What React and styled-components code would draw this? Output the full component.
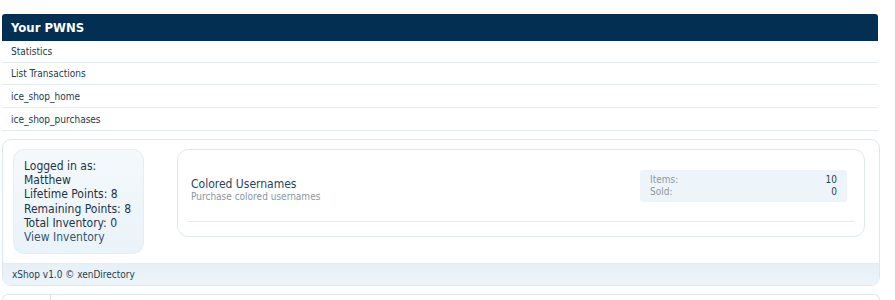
import React from "react";
import styled, { createGlobalStyle } from "styled-components";

const GlobalStyle = createGlobalStyle`
  body {
    margin: 0;
    background: #fff;
    font-family: "DejaVu Sans Condensed", "DejaVu Sans", sans-serif;
    color: #2b3f4f;
  }
`;

const Page = styled.div`
  width: 878px;
  padding: 14px 0 0 2px;
`;

const Section = styled.div`
  width: 876px;
`;

const Header = styled.h3`
  margin: 0;
  height: 27px;
  padding: 0 9px;
  display: flex;
  align-items: center;
  background: #032f53;
  border-radius: 3px 3px 0 0;
  color: #fff;
  font-size: 13px;
  font-weight: bold;
`;

const NavRow = styled.a`
  display: flex;
  align-items: center;
  height: 21px;
  padding: 0 9px;
  border-bottom: 1px solid #e4ecf1;
  font-size: 10px;
  color: #243a4c;
  text-decoration: none;
  &:nth-of-type(3), &:nth-of-type(4) { height: 22px; }
`;

const Shop = styled.div`
  margin-top: 8px;
  width: 876px;
  border: 1px solid #dbe8f1;
  border-radius: 9px;
  overflow: hidden;
`;

const ShopBody = styled.div`
  display: flex;
  align-items: flex-start;
  gap: 33px;
  padding: 9px 14px 9px 10px;
`;

const Sidebar = styled.div`
  width: 119px;
  height: 93px;
  padding: 5px 0 5px 10px;
  background: linear-gradient(#f4f9fc, #eaf3f9);
  border: 1px solid #e3eef6;
  border-radius: 11px;
  font-size: 12px;
  line-height: 14.2px;
  color: #1d3448;
  display: flex;
  flex-direction: column;
  justify-content: center;
`;

const SideLink = styled.a`
  color: #35566f;
  text-decoration: none;
`;

const ItemCard = styled.div`
  flex: 1;
  height: 86px;
  border: 1px solid #dfe9f0;
  border-radius: 11px;
  padding: 0 10px;
  display: flex;
  flex-direction: column;
`;

const ItemMain = styled.div`
  flex: 1;
  display: flex;
  align-items: center;
  justify-content: space-between;
  padding: 0 7px 0 3px;
  border-bottom: 1px solid #e3ecf2;
  margin-bottom: 14px;
`;

const ItemText = styled.div`
  padding-top: 8px;
`;

const ItemTitle = styled.div`
  font-size: 12px;
  color: #26465e;
  line-height: 14px;
`;

const ItemDesc = styled.div`
  font-size: 10px;
  color: #8a969f;
  line-height: 12px;
`;

const Stats = styled.dl`
  margin: 0;
  width: 187px;
  padding: 4px 10px;
  background: #eef5fa;
  border-radius: 3px;
  display: grid;
  grid-template-columns: 1fr auto;
  font-size: 10px;
  line-height: 12px;
  dt { color: #8a97a2; }
  dd { margin: 0; color: #2b3f4f; text-align: right; }
`;

const Footer = styled.div`
  height: 21px;
  padding: 0 9px;
  display: flex;
  align-items: center;
  background: linear-gradient(#e6f0f7, #edf4f9);
  border-top: 1px solid #e1ecf4;
  font-size: 10px;
  color: #2b3f4f;
`;

const NextBox = styled.div`
  margin-top: 8px;
  width: 876px;
  height: 10px;
  border: 1px solid #dbe8f1;
  border-bottom: none;
  border-radius: 6px 6px 0 0;
  display: flex;
`;

const Tab = styled.div`
  width: 47px;
  border-right: 1px solid #d4e2ec;
`;

const links = ["Statistics", "List Transactions", "ice_shop_home", "ice_shop_purchases"];

export default function App() {
  return (
    <Page>
      <GlobalStyle />
      <Section>
        <Header>Your PWNS</Header>
        {links.map((l) => (
          <NavRow key={l}>{l}</NavRow>
        ))}
      </Section>
      <Shop>
        <ShopBody>
          <Sidebar>
            <div>Logged in as:</div>
            <div>Matthew</div>
            <div>Lifetime Points: 8</div>
            <div>Remaining Points: 8</div>
            <div>Total Inventory: 0</div>
            <SideLink>View Inventory</SideLink>
          </Sidebar>
          <ItemCard>
            <ItemMain>
              <ItemText>
                <ItemTitle>Colored Usernames</ItemTitle>
                <ItemDesc>Purchase colored usernames</ItemDesc>
              </ItemText>
              <Stats>
                <dt>Items:</dt>
                <dd>10</dd>
                <dt>Sold:</dt>
                <dd>0</dd>
              </Stats>
            </ItemMain>
          </ItemCard>
        </ShopBody>
        <Footer>xShop v1.0 © xenDirectory</Footer>
      </Shop>
      <NextBox>
        <Tab />
      </NextBox>
    </Page>
  );
}
